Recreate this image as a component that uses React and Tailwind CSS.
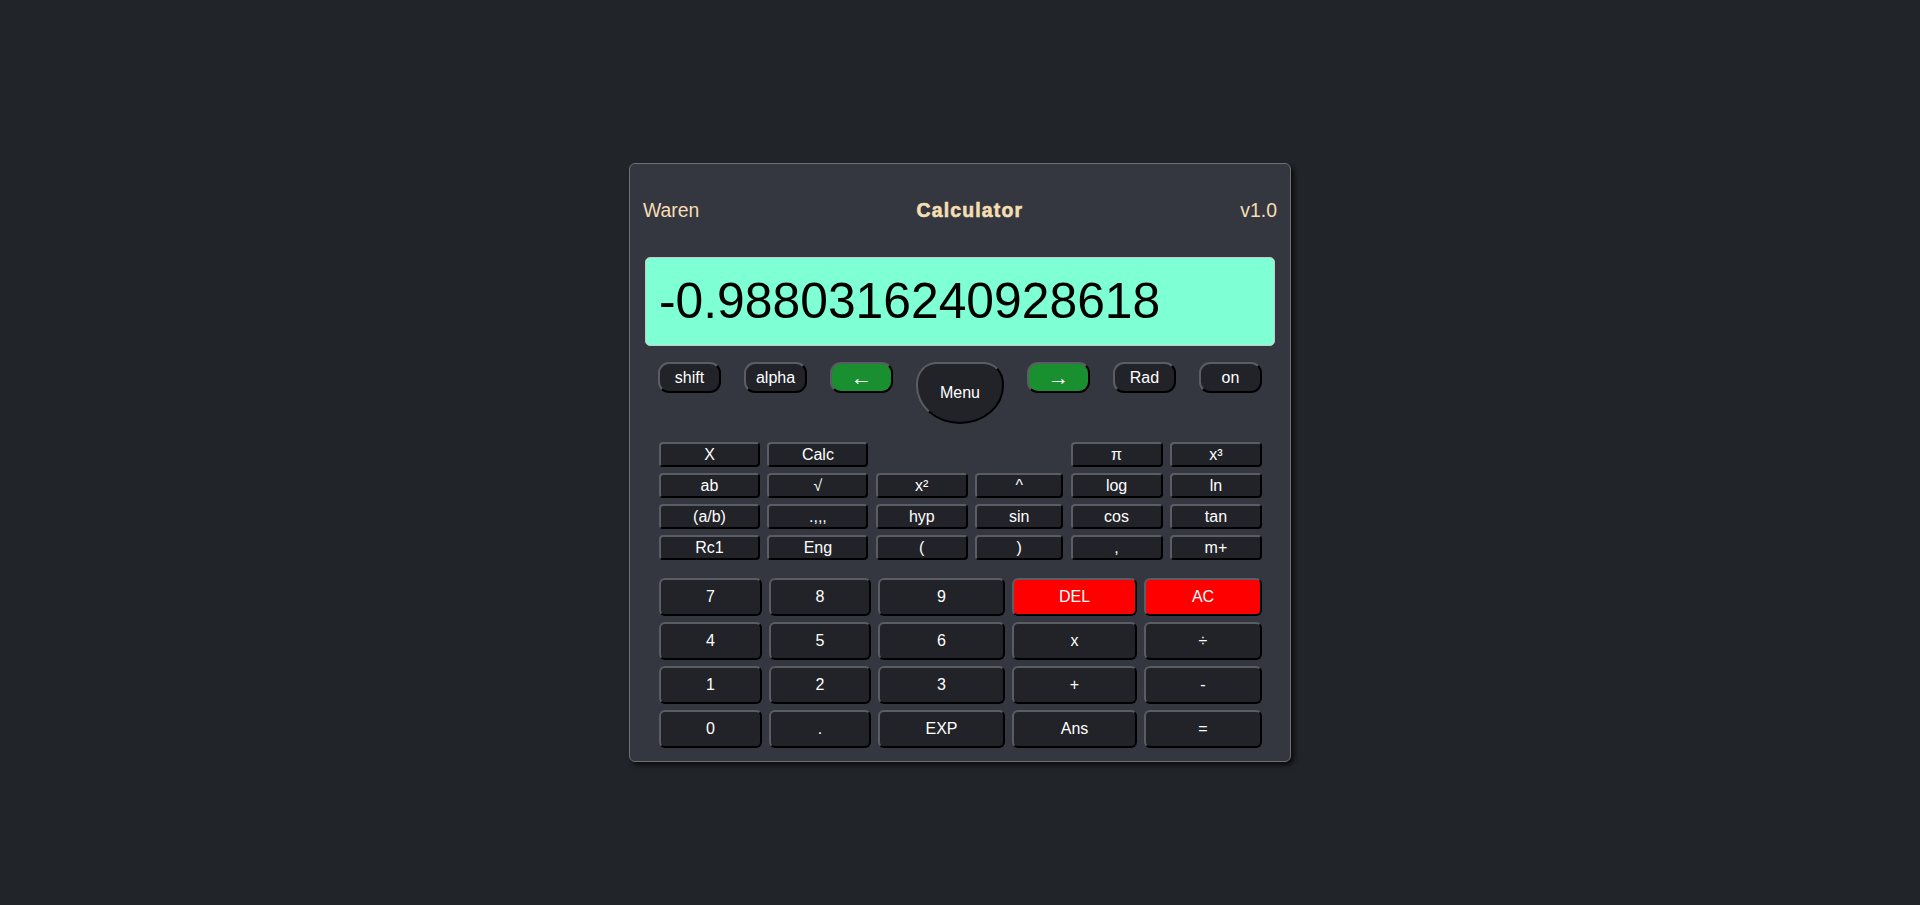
import React from "react";

const font = { fontFamily: '"Liberation Sans", Arial, sans-serif' };

const keyBase =
  "flex items-center justify-center text-white text-[16px] border-2 border-t-[#5a5d63] border-l-[#5a5d63] border-r-black border-b-black";

const topKeys = [
  { label: "shift" },
  { label: "alpha" },
  { label: "←", green: true },
  { label: "Menu", menu: true },
  { label: "→", green: true },
  { label: "Rad" },
  { label: "on" },
];

const funcKeys = [
  ["X", "Calc", null, null, "π", "x³"],
  ["ab", "√", "x²", "^", "log", "ln"],
  ["(a/b)", ".,,,", "hyp", "sin", "cos", "tan"],
  ["Rc1", "Eng", "(", ")", ",", "m+"],
];

const numKeys = [
  ["7", "8", "9", "DEL", "AC"],
  ["4", "5", "6", "x", "÷"],
  ["1", "2", "3", "+", "-"],
  ["0", ".", "EXP", "Ans", "="],
];

function TopKey({ label, green, menu }) {
  if (menu) {
    return (
      <button
        className={`${keyBase} w-[88px] h-[62px] bg-[#212329] rounded-[20px_20px_44px_44px/22px_22px_38px_38px]`}
      >
        Menu
      </button>
    );
  }
  return (
    <button
      className={`${keyBase} w-[63px] h-[31px] rounded-[11px] ${
        green ? "bg-[#1a8f30] text-[21px]" : "bg-[#212329]"
      }`}
    >
      {label}
    </button>
  );
}

export default function App() {
  return (
    <div className="min-h-screen bg-[#212429] flex justify-center pt-[163px]" style={font}>
      <div className="w-[662px] h-[599px] bg-[#343740] border border-[#6e7076] rounded-[6px] shadow-[3px_3px_5px_rgba(0,0,0,0.7)] px-[13px] pt-[35px]">
        {/* header */}
        <div className="flex justify-between items-center h-[22px] text-[19.4px] leading-[22px] text-[#f5deb3]">
          <span>Waren</span>
          <span className="font-bold tracking-[1.2px] [-webkit-text-stroke:0.6px_#f5deb3]">Calculator</span>
          <span>v1.0</span>
        </div>

        {/* display */}
        <div className="mt-[36px] mx-[2px] h-[89px] flex items-center pl-[13px] bg-[#7fffd4] border border-[#c8c8c8] rounded-[5px] text-black text-[49.8px]">
          -0.9880316240928618
        </div>

        {/* control row */}
        <div className="mt-[16px] ml-[15px] flex items-start gap-[23px]">
          {topKeys.map((k) => (
            <TopKey key={k.label} {...k} />
          ))}
        </div>

        {/* function keys */}
        <div className="mt-[18px] ml-[16px] grid grid-cols-[101px_101px_92px_88px_92px_92px] gap-x-[7.4px] gap-y-[6px]">
          {funcKeys.flat().map((k, i) =>
            k === null ? (
              <div key={i} />
            ) : (
              <button
                key={i}
                className={`${keyBase} h-[25px] rounded-[4px] bg-[#212329]`}
              >
                {k}
              </button>
            )
          )}
        </div>

        {/* number keys */}
        <div className="mt-[18px] ml-[16px] grid grid-cols-[103px_102px_127px_125px_118px] gap-x-[7px] gap-y-[6px]">
          {numKeys.flat().map((k) => (
            <button
              key={k}
              className={`${keyBase} h-[38px] rounded-[6px] ${
                k === "DEL" || k === "AC" ? "bg-[#ff0000]" : "bg-[#212329]"
              }`}
            >
              {k}
            </button>
          ))}
        </div>
      </div>
    </div>
  );
}
